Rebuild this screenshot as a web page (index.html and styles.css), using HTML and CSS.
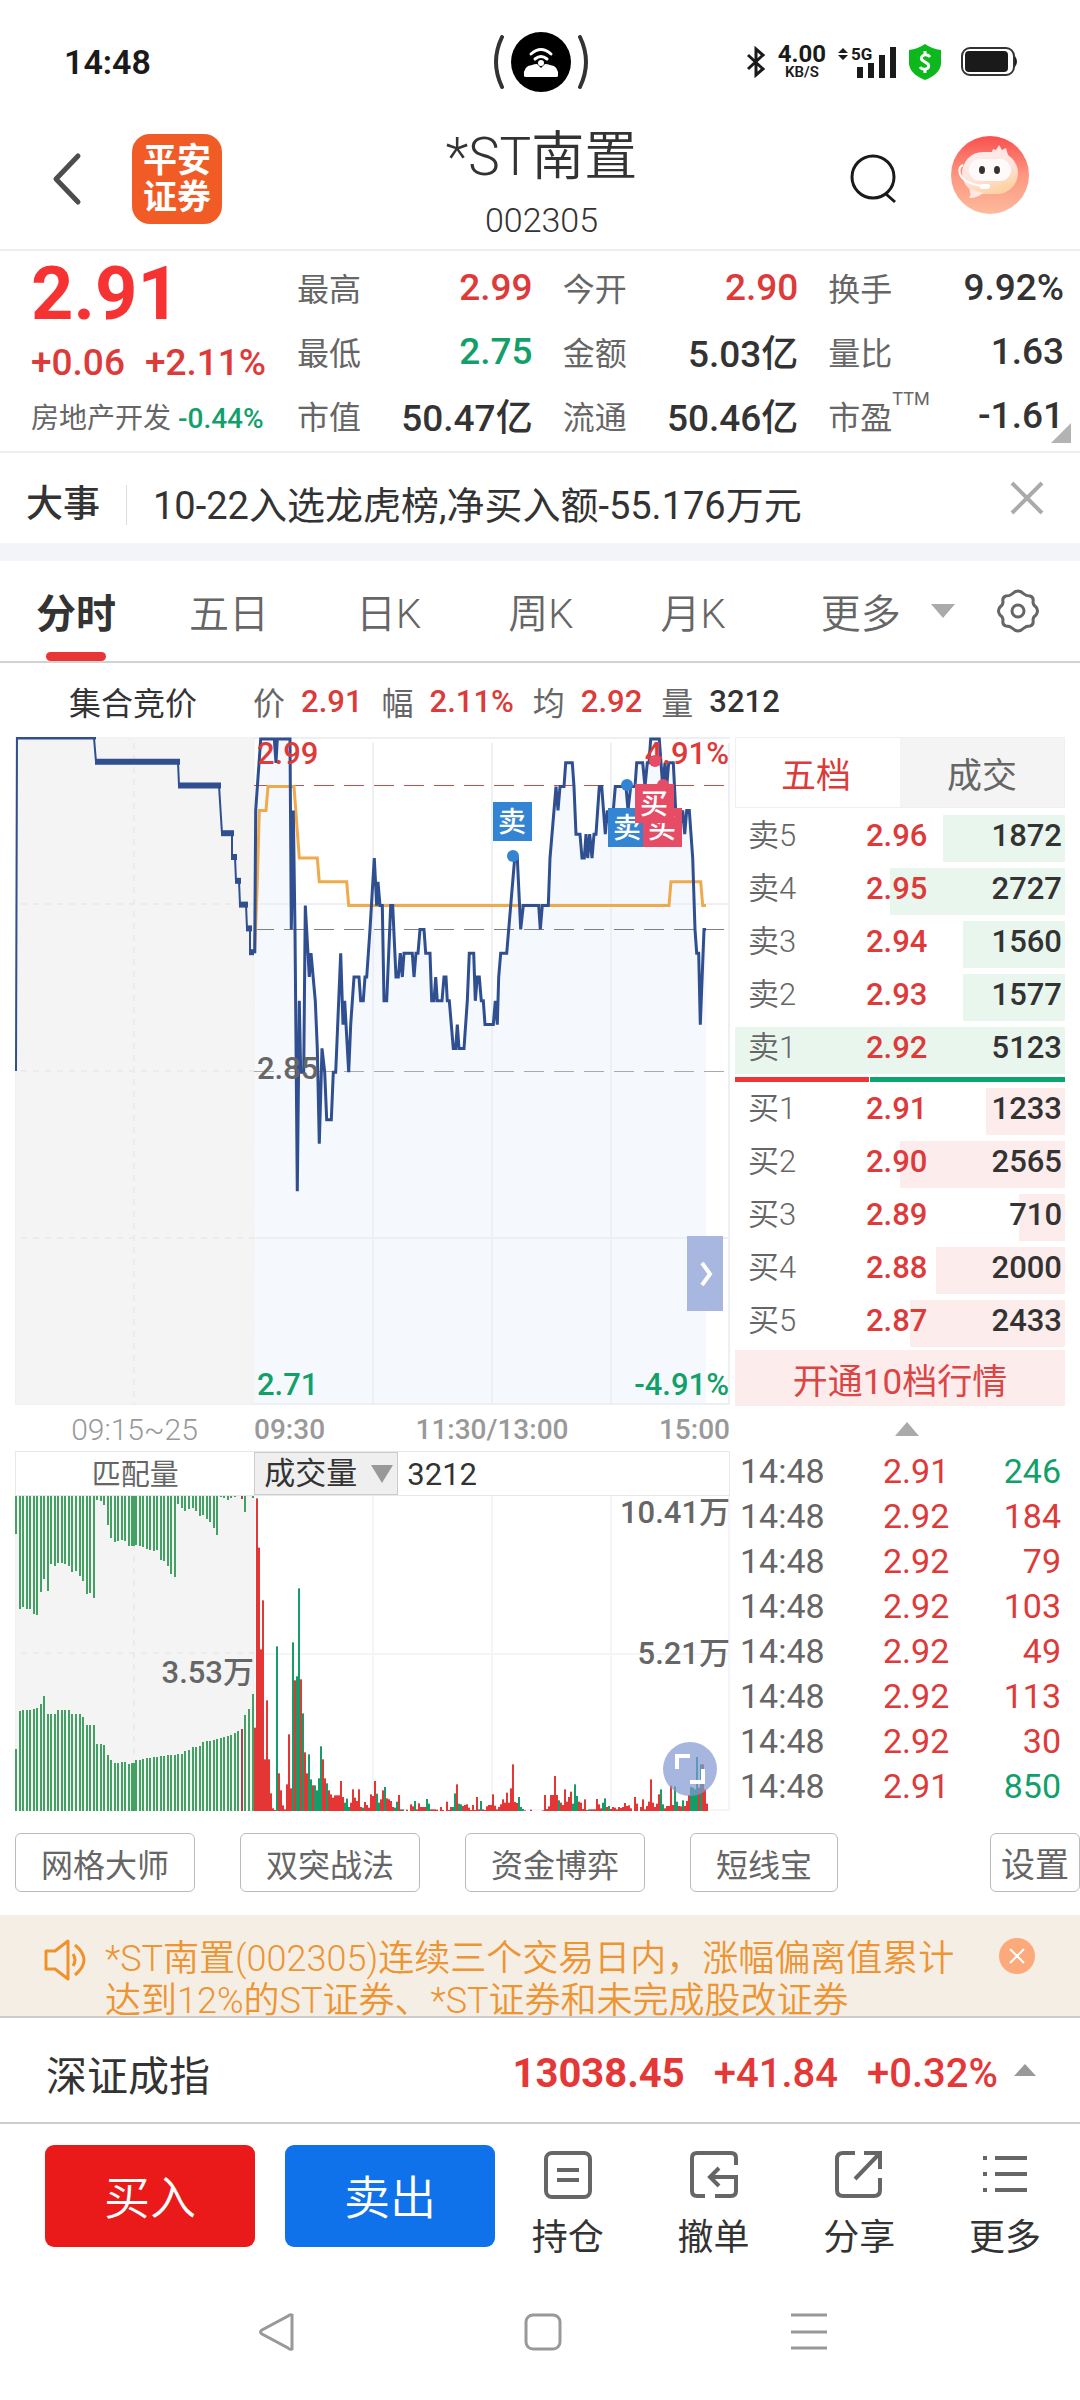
FILE: index.html
```html
<!DOCTYPE html>
<html lang="zh-CN">
<head>
    <meta charset="UTF-8">
    <meta name="viewport" content="width=device-width, initial-scale=1.0">
    <title>*ST南置 002305</title>
    <link rel="stylesheet" href="styles.css">
</head>
<body>
    <!-- 状态栏 -->
    <div class="status">
        <span class="status-time">14:48</span>
        <svg class="island" width="96" height="64" viewBox="0 0 96 64">
            <circle cx="48" cy="32" r="30"/>
            <path class="arc" d="M9 7Q-3 32 9 57M87 7Q99 32 87 57"/>
            <path class="white" d="M31 46q-1-10 8-11q2-1 5-1l4 4l4-4q3 0 5 1q9 1 8 11q0 1-2 1H33q-2 0-2-1z"/>
            <path class="wave" d="M38 24q10-9 20 0M42 29q6-5 12 0"/>
            <circle class="white" cx="48" cy="33" r="3"/>
        </svg>
        <div class="status-icons">
            <svg width="20" height="32" viewBox="0 0 20 32"><path class="bt" d="M2 9L17 23L10 29V3L17 9L2 23"/></svg>
            <span class="speed"><b>4.00</b><small>KB/S</small></span>
            <svg width="58" height="34" viewBox="0 0 58 34">
                <path d="M5 2l5 5H0zM5 14l5-5H0z" transform="translate(0 1)"/>
                <text x="13" y="15">5G</text>
                <path d="M19 22h6v11h-6zM30 18h6v15h-6zM41 10h6v23h-6zM52 2h6v31h-6z"/>
            </svg>
            <svg width="34" height="36" viewBox="0 0 34 36">
                <path class="shield" d="M17 0Q24 5 33 6V20Q32 30 17 36Q2 30 1 20V6Q10 5 17 0z"/>
                <path class="dollar" d="M22 13Q20 10 16 11Q12 13 14 16L20 20Q22 24 18 25Q14 26 12 23M17 7v4M17 25v4"/>
            </svg>
            <svg class="battery-icon" width="58" height="32" viewBox="0 0 58 32">
                <rect class="battery" x="2" y="2" width="52" height="27" rx="8"/>
                <rect x="5" y="5" width="43" height="21" rx="4"/>
                <path d="M55 10q4 6 0 11z"/>
            </svg>
        </div>
    </div>

    <!-- 标题栏 -->
    <header class="header">
        <div class="header-left">
            <button class="icon-btn" aria-label="返回">
                <svg width="32" height="54" viewBox="0 0 32 54"><path class="back" d="M28 4L6 27L28 50"/></svg>
            </button>
            <a class="logo" href="#">平安<br>证券</a>
        </div>
        <div class="title">
            <h1>*ST南置</h1>
            <p>002305</p>
        </div>
        <div class="header-right">
            <button class="icon-btn" aria-label="搜索">
                <svg width="50" height="54" viewBox="0 0 50 54"><circle class="search" cx="23" cy="25" r="21"/><path class="search" d="M36 42L45 50"/></svg>
            </button>
            <button class="icon-btn service" aria-label="客服">
                <svg width="80" height="80" viewBox="0 0 80 80">
                    <defs>
                        <linearGradient id="av" x2="0" y2="1"><stop offset="0" stop-color="#f9504f"/><stop offset="0.5" stop-color="#fd9680"/><stop offset="1" stop-color="#fdba9c"/></linearGradient>
                        <linearGradient id="head" x2="0.5" y2="1"><stop offset="0" stop-color="#ffeeee"/><stop offset="0.6" stop-color="#ffe3dc"/><stop offset="1" stop-color="#fdd3a4"/></linearGradient>
                    </defs>
                    <circle cx="40" cy="40" r="39" fill="url(#av)"/>
                    <path d="M41 19l2-5 3 1 3-5 3 5 4-2 2 7z" fill="#ffe4e6"/>
                    <rect x="12" y="17" width="56" height="42" rx="21" fill="url(#head)"/>
                    <path d="M19 54q3 5 0 9q9 0 14-5z" fill="#ffe9e2"/>
                    <rect x="19" y="24" width="42" height="22" rx="11" fill="#fffafa"/>
                    <path d="M13 30q-5 2-3 9q3 9 22 12" fill="none" stroke="#fff" stroke-width="2"/>
                    <rect x="30" y="49" width="10" height="5" rx="2" fill="#fff"/>
                    <ellipse cx="32" cy="35" rx="3" ry="4" fill="#333"/>
                    <ellipse cx="47" cy="35" rx="3" ry="4" fill="#333"/>
                </svg>
            </button>
        </div>
    </header>

    <!-- 行情概览 -->
    <section class="quote">
        <div class="price-box">
            <div class="price">2.91</div>
            <div class="change"><span>+0.06</span><span>+2.11%</span></div>
            <div class="sector">房地产开发 <span class="green">-0.44%</span></div>
        </div>
        <dl class="stats">
            <div><dt>最高</dt><dd class="red">2.99</dd></div>
            <div><dt>今开</dt><dd class="red">2.90</dd></div>
            <div><dt>换手</dt><dd>9.92%</dd></div>
            <div><dt>最低</dt><dd class="green">2.75</dd></div>
            <div><dt>金额</dt><dd>5.03亿</dd></div>
            <div><dt>量比</dt><dd>1.63</dd></div>
            <div><dt>市值</dt><dd>50.47亿</dd></div>
            <div><dt>流通</dt><dd>50.46亿</dd></div>
            <div><dt>市盈<sup>TTM</sup></dt><dd>-1.61</dd></div>
        </dl>
        <i class="corner"></i>
    </section>

    <section class="news">
        <strong>大事</strong>
        <a href="#">10-22入选龙虎榜,净买入额-55.176万元</a>
        <button class="icon-btn" aria-label="关闭">
            <svg width="34" height="34" viewBox="0 0 34 34"><path class="close" d="M2 2L32 32M32 2L2 32"/></svg>
        </button>
    </section>

    <!-- 周期切换 -->
    <nav class="tabs">
        <button class="tab active">分时</button>
        <button class="tab">五日</button>
        <button class="tab">日K</button>
        <button class="tab">周K</button>
        <button class="tab">月K</button>
        <button class="tab more">更多<i class="down"></i></button>
        <button class="icon-btn gear-btn" aria-label="设置">
            <svg width="44" height="46" viewBox="0 0 44 46">
                <path class="gear" d="M22 3Q25 3 28 6Q30 8 34 8Q38 9 37 14Q37 17 40 19Q43 23 40 27Q37 29 37 32Q38 37 34 38Q30 38 28 40Q22 46 16 40Q14 38 10 38Q6 37 7 32Q7 29 4 27Q1 23 4 19Q7 17 7 14Q6 9 10 8Q14 8 16 6Q19 3 22 3z"/>
                <circle class="gear" cx="22" cy="23" r="6"/>
            </svg>
        </button>
    </nav>

    <div class="info">
        <span class="info-name">集合竞价</span>
        <span>价</span><b class="red">2.91</b>
        <span>幅</span><b class="red">2.11%</b>
        <span>均</span><b class="red">2.92</b>
        <span>量</span><b>3212</b>
    </div>

    <main class="market">
        <div class="charts">
            <div class="chart-box">
                <svg id="priceChart" class="chart" viewBox="0 0 715 668">
                    <rect class="auction-bg" x="0" y="0" width="239" height="668"/>
                    <g id="priceSeries"></g>
                    <path class="grid" d="M239 1H715M239 167H715M239 501H715M239 667H715M358 6V668M477 6V668M596 6V668M714 6V668"/>
                    <path class="grid dash" d="M6 167H239M6 334H239M6 501H239M119 6V668"/>
                    <path class="ref up" d="M239 48H710"/>
                    <path class="ref" d="M239 192H710"/>
                    <path class="ref mid" d="M239 334H710"/>
                    <g id="priceLines"></g>
                    <text class="red" x="242" y="27">2.99</text>
                    <text class="red" x="714" y="27" text-anchor="end">4.91%</text>
                    <text class="grey" x="242" y="342">2.85</text>
                    <text class="green" x="242" y="658">2.71</text>
                    <text class="green" x="714" y="658" text-anchor="end">-4.91%</text>
                    <g id="marks"></g>
                </svg>
                <button class="side-btn" aria-label="展开">
                    <svg width="14" height="26" viewBox="0 0 14 26"><path d="M2 2L10 13L2 24"/></svg>
                </button>
            </div>
            <div class="axis">
                <span class="axis-auction">09:15~25</span>
                <span class="axis-main"><b>09:30</b><b>11:30/13:00</b><b>15:00</b></span>
            </div>
            <div class="vol-head">
                <span class="vol-auction">匹配量</span>
                <label class="vol-select">
                    <select aria-label="指标"><option>成交量</option></select>
                    <i class="down"></i>
                </label>
                <span class="vol-now">3212</span>
            </div>
            <div class="chart-box">
                <svg id="volChart" class="chart" viewBox="0 0 715 315">
                    <rect class="auction-bg" x="0" y="0" width="239" height="315"/>
                    <path class="grid vol-grid" d="M239 158H715M239 314H715M358 0V315M477 0V315M596 0V315M714 0V315"/>
                    <path class="grid dash" d="M6 157H239M119 0V315"/>
                    <g id="volBars"></g>
                    <text class="grey" x="239" y="187" text-anchor="end">3.53万</text>
                    <text class="grey" x="715" y="27" text-anchor="end">10.41万</text>
                    <text class="grey" x="715" y="168" text-anchor="end">5.21万</text>
                </svg>
                <button class="zoom-btn" aria-label="全屏">
                    <svg width="30" height="30" viewBox="0 0 30 30"><path d="M2 15V2H15M28 15V28H15"/></svg>
                </button>
            </div>
        </div>

        <aside class="book">
            <div class="book-tabs">
                <button class="on">五档</button>
                <button>成交</button>
            </div>
            <table class="depth sell">
                <tr style="--w: 37%"><th>卖5</th><td class="red">2.96</td><td>1872</td></tr>
                <tr style="--w: 53%"><th>卖4</th><td class="red">2.95</td><td>2727</td></tr>
                <tr style="--w: 31%"><th>卖3</th><td class="red">2.94</td><td>1560</td></tr>
                <tr style="--w: 31%"><th>卖2</th><td class="red">2.93</td><td>1577</td></tr>
                <tr style="--w: 100%"><th>卖1</th><td class="red">2.92</td><td>5123</td></tr>
            </table>
            <div class="ratio"><i style="width: 41%"></i></div>
            <table class="depth buy">
                <tr style="--w: 24%"><th>买1</th><td class="red">2.91</td><td>1233</td></tr>
                <tr style="--w: 50%"><th>买2</th><td class="red">2.90</td><td>2565</td></tr>
                <tr style="--w: 14%"><th>买3</th><td class="red">2.89</td><td>710</td></tr>
                <tr style="--w: 39%"><th>买4</th><td class="red">2.88</td><td>2000</td></tr>
                <tr style="--w: 47%"><th>买5</th><td class="red">2.87</td><td>2433</td></tr>
            </table>
            <button class="open-ten">开通10档行情</button>
            <div class="fold"><i class="up-arrow"></i></div>
            <table class="ticks">
                <tr><td>14:48</td><td class="red">2.91</td><td class="green">246</td></tr>
                <tr><td>14:48</td><td class="red">2.92</td><td class="red">184</td></tr>
                <tr><td>14:48</td><td class="red">2.92</td><td class="red">79</td></tr>
                <tr><td>14:48</td><td class="red">2.92</td><td class="red">103</td></tr>
                <tr><td>14:48</td><td class="red">2.92</td><td class="red">49</td></tr>
                <tr><td>14:48</td><td class="red">2.92</td><td class="red">113</td></tr>
                <tr><td>14:48</td><td class="red">2.92</td><td class="red">30</td></tr>
                <tr><td>14:48</td><td class="red">2.91</td><td class="green">850</td></tr>
            </table>
        </aside>
    </main>

    <div class="tools">
        <button>网格大师</button>
        <button>双突战法</button>
        <button>资金博弈</button>
        <button>短线宝</button>
        <button class="set">设置</button>
    </div>

    <!-- 公告 -->
    <section class="notice">
        <svg class="horn" width="44" height="44" viewBox="0 0 44 44"><path d="M3 13V31H12L25 41V3L12 13zM30 16Q34 22 30 28M32 7Q50 22 32 37"/></svg>
        <p>*ST南置(002305)连续三个交易日内，涨幅偏离值累计<br>达到12%的ST证券、*ST证券和未完成股改证券</p>
        <button class="icon-btn" aria-label="关闭公告">
            <svg width="36" height="36" viewBox="0 0 36 36"><circle cx="18" cy="18" r="18" fill="#fca97c"/><path d="M11 11L25 25M25 11L11 25" stroke="#fff" stroke-width="2"/></svg>
        </button>
    </section>

    <section class="index-row">
        <span class="index-name">深证成指</span>
        <strong>13038.45</strong>
        <span>+41.84</span>
        <span>+0.32%</span>
        <i class="up-arrow"></i>
    </section>

    <footer class="actions">
        <button class="trade buy-btn">买入</button>
        <button class="trade sell-btn">卖出</button>
        <button class="action">
            <svg width="52" height="52" viewBox="0 0 52 52"><rect x="4" y="4" width="44" height="44" rx="6"/><path d="M15 21H37M15 31H37"/></svg>
            持仓
        </button>
        <button class="action">
            <svg width="52" height="52" viewBox="0 0 52 52"><path d="M48 16V9Q48 4 43 4H9Q4 4 4 9V42Q4 47 9 47H17M27 47H43Q48 47 48 42V28H22M31 19L22 28L31 37"/></svg>
            撤单
        </button>
        <button class="action">
            <svg width="52" height="52" viewBox="0 0 52 52"><path d="M22 4H10Q4 4 4 10V41Q4 47 10 47H41Q47 47 47 41V29M31 4H47V20M47 4L22 30"/></svg>
            分享
        </button>
        <button class="action">
            <svg width="52" height="52" viewBox="0 0 52 52"><path d="M4 9H8M16 9H48M4 25H8M16 25H48M4 41H8M16 41H48"/></svg>
            更多
        </button>
    </footer>

    <div class="sysnav">
        <svg width="40" height="40" viewBox="0 0 40 40"><path d="M35 3V37Q33 38 31 36L5 22Q2 20 5 18L31 4Q33 2 35 3z"/></svg>
        <svg width="40" height="40" viewBox="0 0 40 40"><rect x="3" y="3" width="34" height="34" rx="7"/></svg>
        <svg width="40" height="40" viewBox="0 0 40 40"><path d="M2 3H38M2 20H38M2 36H38"/></svg>
    </div>

    <script src="script.js"></script>
</body>
</html>
```
FILE: styles.css
```css
* {
    box-sizing: border-box;
}
body {
    margin: 0;
    background: #fff;
    color: #333;
    font-family: Roboto, "Noto Sans CJK SC", sans-serif;
}
button, select {
    margin: 0;
    padding: 0;
    border: none;
    background: none;
    color: inherit;
    font: inherit;
    cursor: pointer;
}
h1, p, dl, dd {
    margin: 0;
}
a {
    color: inherit;
    text-decoration: none;
}
svg {
    display: block;
    flex: none;
}
.red {
    color: #dd3a3a;
    fill: #dd3a3a;
}
.green {
    color: #12a06a;
    fill: #12a06a;
}
.grey {
    fill: #666;
}
.icon-btn {
    flex: none;
}
.down {
    flex: none;
    border: 12px solid transparent;
    border-top: 14px solid #aaa;
    border-bottom: none;
}
.up-arrow {
    flex: none;
    border: 12px solid transparent;
    border-bottom: 14px solid #aaa;
    border-top: none;
}

/* 状态栏 */
.status {
    display: grid;
    grid-template-columns: 1fr auto 1fr;
    align-items: center;
    height: 124px;
    padding: 0 62px 0 64px;
    color: #1a1a1a;
}
.status-time {
    font-size: 34px;
    font-weight: 600;
}
.island .arc, .island .wave {
    fill: none;
    stroke: #333;
    stroke-width: 4;
    stroke-linecap: round;
}
.island .wave {
    stroke: #fff;
    stroke-width: 3;
}
.island .white {
    fill: #fff;
}
.status-icons {
    display: flex;
    justify-content: flex-end;
    align-items: center;
    gap: 12px;
    fill: #1a1a1a;
}
.status-icons text {
    font-size: 17px;
    font-weight: 700;
}
.bt {
    fill: none;
    stroke: #1a1a1a;
    stroke-width: 3;
}
.speed {
    display: flex;
    flex-direction: column;
    align-items: center;
    font-size: 24px;
    line-height: 20px;
}
.speed small {
    font-size: 15px;
    font-weight: 600;
    line-height: 16px;
}
.shield {
    fill: #0cb81c;
}
.dollar {
    fill: none;
    stroke: #fff;
    stroke-width: 3;
}
.battery-icon {
    margin-left: 6px;
}
.battery {
    fill: none;
    stroke: #333;
    stroke-width: 2;
}

/* 标题栏 */
.header {
    display: grid;
    grid-template-columns: 1fr auto 1fr;
    align-items: center;
    height: 127px;
    padding: 0 50px;
    border-bottom: 2px solid #eee;
}
.header-left, .header-right {
    display: flex;
    align-items: center;
    gap: 50px;
    padding-bottom: 16px;
}
.header-right {
    justify-content: flex-end;
}
.service {
    padding-bottom: 8px;
}
.back {
    fill: none;
    stroke: #4d4d4d;
    stroke-width: 5;
    stroke-linecap: round;
    stroke-linejoin: round;
}
.logo {
    width: 90px;
    height: 90px;
    padding-top: 8px;
    border-radius: 18px;
    background: #f15b25;
    color: #fff;
    font-size: 34px;
    font-weight: 700;
    line-height: 37px;
    text-align: center;
}
.title {
    padding-left: 3px;
    text-align: center;
}
.title h1 {
    font-size: 53px;
    font-weight: 350;
    line-height: 66px;
}
.title p {
    font-size: 34px;
    font-weight: 350;
    line-height: 60px;
}
.search {
    fill: none;
    stroke: #1a1a1a;
    stroke-width: 3;
}

/* 行情概览 */
.quote {
    position: relative;
    display: flex;
    height: 202px;
    padding: 4px 16px 0 31px;
    border-bottom: 2px solid #eee;
}
.price-box {
    width: 266px;
    flex: none;
}
.price {
    height: 78px;
    color: #f63232;
    font-size: 74px;
    font-weight: 700;
    line-height: 78px;
}
.change {
    display: flex;
    gap: 20px;
    height: 60px;
    color: #dd3a3a;
    font-size: 37px;
    font-weight: 500;
    line-height: 60px;
}
.sector {
    color: #666;
    font-size: 28px;
    line-height: 52px;
    white-space: nowrap;
}
.sector .green {
    font-weight: 500;
}
.stats {
    flex: 1;
    display: grid;
    grid-template-columns: repeat(3, 1fr);
    grid-auto-rows: 64px;
    column-gap: 30px;
}
.stats div {
    display: flex;
    justify-content: space-between;
    align-items: center;
}
.stats dt {
    color: #666;
    font-size: 32px;
}
.stats dd {
    font-size: 37px;
    font-weight: 500;
}
.stats sup {
    font-size: 18px;
    line-height: 0;
    vertical-align: 24px;
}
.corner {
    position: absolute;
    right: 9px;
    bottom: 8px;
    border: 10px solid #b3b3b3;
    border-top-color: transparent;
    border-left-color: transparent;
}

.news {
    display: flex;
    align-items: center;
    height: 108px;
    padding: 0 36px 0 26px;
    border-bottom: 18px solid #f3f4f9;
    font-size: 38px;
}
.news strong {
    margin-top: 14px;
    padding-right: 26px;
    border-right: 1px solid #ddd;
    font-size: 37px;
    font-weight: 500;
    line-height: 40px;
}
.news a {
    flex: 1;
    padding: 8px 0 0 26px;
}
.close {
    stroke: #aaa;
    stroke-width: 4;
}

/* 周期切换 */
.tabs {
    display: flex;
    align-items: center;
    gap: 87px;
    height: 102px;
    padding: 0 40px 0 36px;
    border-bottom: 2px solid #d2d2d2;
}
.tab {
    position: relative;
    height: 100px;
    color: #666;
    font-size: 40px;
    font-weight: 350;
    white-space: nowrap;
}
.tab.active {
    margin-right: -14px;
    color: #333;
    font-weight: 700;
}
.tab.active::after {
    content: "";
    position: absolute;
    left: 10px;
    right: 10px;
    bottom: 0;
    height: 9px;
    border-radius: 5px;
    background: #e93535;
}
.tab.more {
    display: flex;
    align-items: center;
    gap: 30px;
    margin: 0 -87px 0 8px;
}
.gear-btn {
    margin-left: auto;
}
.gear {
    fill: none;
    stroke: #666;
    stroke-width: 3;
}

.info {
    display: flex;
    align-items: center;
    height: 74px;
    padding: 2px 0 0 69px;
    font-size: 32px;
}
.info span {
    color: #666;
}
.info b {
    margin: 0 19px 0 16px;
    font-size: 31px;
    font-weight: 500;
}
.info .info-name {
    margin-right: 56px;
    color: #333;
}

/* 图表区 */
.market {
    display: grid;
    grid-template-columns: minmax(0, 1fr) 330px;
    gap: 5px;
    padding: 0 15px;
}
.chart-box {
    position: relative;
}
.chart {
    width: 100%;
    height: auto;
}
.chart text {
    font-size: 31px;
    font-weight: 500;
}
.chart .mark-text {
    fill: #fff;
    font-size: 28px;
    font-weight: 500;
}
.auction-bg {
    fill: #f4f4f4;
    stroke: #eee;
}
.grid {
    fill: none;
    stroke: #edeff3;
    stroke-width: 2;
}
.grid.dash {
    stroke: #ebebeb;
    stroke-dasharray: 6 6;
}
.grid.vol-grid {
    stroke: #f5f5f7;
}
.ref {
    stroke: #808080;
    stroke-width: 1;
    stroke-dasharray: 20 10;
    shape-rendering: crispEdges;
}
.ref.up {
    stroke: #c4514c;
}
.ref.mid {
    stroke: #aaa;
}
.line-area {
    fill: #f5f8fd;
}
.line-price, .line-auction, .line-step {
    fill: none;
    stroke: #2f4f91;
    stroke-width: 3;
}
.line-auction {
    stroke-width: 2;
}
.line-step {
    stroke-width: 6;
}
.line-avg {
    fill: none;
    stroke: #efaa4b;
    stroke-width: 3;
}
.side-btn {
    position: absolute;
    right: 7px;
    top: 499px;
    width: 36px;
    height: 75px;
    padding-left: 13px;
    background: #a8b7df;
}
.side-btn path, .zoom-btn path {
    fill: none;
    stroke: #fff;
    stroke-width: 4;
}
.zoom-btn {
    position: absolute;
    right: 13px;
    bottom: 15px;
    width: 54px;
    height: 54px;
    padding-left: 12px;
    border-radius: 50%;
    background: rgba(130, 151, 210, 0.7);
}
.axis {
    display: flex;
    height: 46px;
    color: #999;
    font-size: 30px;
    line-height: 50px;
}
.axis-auction {
    flex: 239;
    text-align: center;
    font-weight: 300;
}
.axis-main {
    flex: 476;
    display: flex;
    justify-content: space-between;
    font-size: 28px;
}
.axis-main b {
    font-weight: 500;
}
.vol-head {
    display: flex;
    height: 45px;
    border: 1px solid #e8e8e8;
    font-size: 31px;
    line-height: 46px;
}
.vol-auction {
    width: calc(100% * 239 / 715);
    color: #666;
    font-size: 29px;
    text-align: center;
}
.vol-select {
    display: flex;
    align-items: center;
    gap: 14px;
    width: 144px;
    padding: 0 2px 0 9px;
    border: 1px solid #ccc;
    background: #efefef;
}
.vol-select select {
    appearance: none;
    color: #333;
}
.vol-select .down {
    border-width: 18px 11px 0;
    border-top-color: #999;
}
.vol-now {
    padding-left: 9px;
}

/* 盘口 */
.book {
    font-size: 31px;
}
.book-tabs {
    display: grid;
    grid-template-columns: 164px 1fr;
    height: 71px;
    margin-bottom: 4px;
    border: 1px solid #f0f0f0;
    font-size: 35px;
}
.book-tabs button {
    background: #f4f4f4;
    color: #666;
}
.book-tabs .on {
    padding-right: 4px;
    background: #fff;
    color: #dd3a3a;
}
.depth, .ticks {
    width: 100%;
    border-collapse: collapse;
    table-layout: fixed;
}
.depth tr {
    height: 53px;
    background: linear-gradient(var(--c), var(--c)) right center / var(--w) 47px no-repeat;
}
.sell {
    --c: #e9f6ee;
}
.buy {
    --c: #fcecec;
}
.depth th, .depth td {
    padding: 0 3px 6px 0;
    font-weight: 500;
    line-height: 36px;
}
.depth th {
    width: 131px;
    padding-left: 13px;
    color: #666;
    font-weight: 350;
    text-align: left;
}
.depth td:last-child, .ticks td:last-child {
    text-align: right;
}
.ratio {
    height: 5px;
    margin-bottom: 3px;
    background: #0aa66d;
}
.ratio i {
    display: block;
    height: 5px;
    border-right: 1px solid #fff;
    background: #f03434;
}
.open-ten {
    display: block;
    width: 100%;
    height: 56px;
    background: #fcecec;
    color: #dd4545;
    font-size: 35px;
}
.fold {
    display: flex;
    justify-content: center;
    align-items: flex-start;
    height: 45px;
    padding: 16px 0 0 14px;
}
.ticks tr {
    height: 45px;
}
.ticks td {
    padding: 0 4px 6px 0;
    font-size: 34px;
    line-height: 38px;
}
.ticks td:first-child {
    width: 148px;
    padding-left: 5px;
    color: #666;
}

.tools {
    display: flex;
    gap: 45px;
    padding: 22px 0 23px 15px;
    color: #666;
    font-size: 32px;
}
.tools button {
    height: 59px;
    padding: 0 25px;
    border: 1px solid #bbb;
    border-radius: 6px;
    white-space: nowrap;
}
.tools .set {
    margin-left: auto;
    padding: 0 10px;
    font-size: 34px;
}

/* 公告 */
.notice {
    display: flex;
    align-items: flex-start;
    height: 103px;
    padding: 23px 45px 0 43px;
    overflow: hidden;
    border-bottom: 2px solid #ccc;
    background: #f5eee5;
    color: #ed9433;
}
.notice p {
    flex: 1;
    padding-left: 18px;
    font-size: 36px;
    font-weight: 350;
    line-height: 42px;
    white-space: nowrap;
}
.horn path {
    fill: none;
    stroke: #f0922c;
    stroke-width: 3;
    stroke-linejoin: round;
}

.index-row {
    display: flex;
    align-items: center;
    height: 106px;
    padding: 6px 44px 0 46px;
    border-bottom: 2px solid #ccc;
    color: #e43838;
    font-size: 40px;
    font-weight: 500;
}
.index-row span {
    margin-left: 29px;
}
.index-row .index-name {
    margin: 0 auto 0 0;
    color: #333;
    font-size: 41px;
    font-weight: 400;
}
.index-row .up-arrow {
    margin: 0 0 6px 16px;
    border-width: 0 11px 12px;
    border-bottom-color: #999;
}

/* 底部操作 */
.actions {
    display: flex;
    align-items: flex-start;
    padding: 21px 2px 0 45px;
}
.trade {
    width: 210px;
    height: 102px;
    margin-right: 30px;
    padding-bottom: 4px;
    border-radius: 9px;
    background: #ea1a1a;
    color: #fff;
    font-size: 46px;
    font-weight: 350;
}
.sell-btn {
    margin-right: 0;
    background: #1072eb;
}
.action {
    display: flex;
    flex: 1;
    flex-direction: column;
    align-items: center;
    gap: 10px;
    padding-top: 4px;
    font-size: 36px;
    line-height: 54px;
}
.action path, .action rect {
    fill: none;
    stroke: #666;
    stroke-width: 4;
}
.sysnav {
    display: grid;
    grid-template-columns: 1fr 1fr 1fr;
    justify-items: center;
    padding: 47px 138px 30px 144px;
}
.sysnav path, .sysnav rect {
    fill: none;
    stroke: #999;
    stroke-width: 3;
}
```
FILE: script.js
```js
const NS = 'http://www.w3.org/2000/svg';

function add(parent, tag, attrs, text) {
    const el = document.createElementNS(NS, tag);
    for (const key in attrs) el.setAttribute(key, attrs[key]);
    if (text) el.textContent = text;
    parent.appendChild(el);
    return el;
}

// 每一档 0.01 元，第 0 档为 2.99；x 以 1/3 像素为单位
const toPath = pts => 'M' + pts.map(([x, level]) => `${(x / 3 + 225).toFixed(1)} ${(2 + level * 23.8).toFixed(1)}`).join('L');

const price = [
    [44,9],[47,3],[62,0],[103,0],[108,1],[112,0],[150,0],[154,8],[160,3],[165,8],[172,19],[178,11],[182,14],[191,14],[196,7],
    [208,10],[213,9],[226,11],[232,13],[238,17],[246,13],[254,14],[260,16],[274,16],[280,14],[287,14],[302,9],[309,12],[314,11],
    [326,14],[332,12],[342,10],[357,10],[362,11],[370,11],[375,10],[380,10],[390,8],[403,5],[410,7],[414,6],[420,7],[427,7],
    [432,11],[440,11],[452,7],[458,7],[468,10],[475,10],[481,9],[487,10],[492,9],[517,9],[522,10],[528,9],[534,9],[540,8],
    [552,8],[557,9],[570,9],[575,11],[582,11],[587,10],[592,11],[606,11],[612,10],[618,10],[622,11],[628,11],[640,13],[647,13],
    [652,12],[657,13],[672,13],[682,11],[688,9],[701,9],[706,11],[712,10],[718,10],[724,11],[730,11],[735,12],[760,12],[766,11],
    [772,12],[776,10],[782,9],[800,9],[812,7],[824,5],[832,5],[842,8],[850,7],[896,7],[901,8],[907,7],[925,7],[930,5],[948,2],
    [954,3],[960,2],[972,2],[977,1],[997,1],[1002,2],[1008,4],[1020,4],[1026,5],[1033,5],[1038,4],[1043,5],[1049,4],[1056,5],
    [1062,4],[1068,4],[1078,2],[1085,2],[1096,4],[1102,3],[1114,4],[1126,2],[1158,2],[1164,3],[1172,2],[1185,2],[1190,1],
    [1208,1],[1215,2],[1222,1],[1227,1],[1232,0],[1258,0],[1263,1],[1268,2],[1275,1],[1280,2],[1286,1],[1300,1],[1307,3],
    [1316,4],[1328,3],[1334,4],[1340,3],[1348,3],[1358,5],[1365,8],[1370,9],[1376,9],[1381,12],[1392,8],[1398,8]
];
const avg = [
    [44,9],[52,6],[58,3],[78,3],[84,2],[162,2],[178,5],[232,5],[238,6],[320,6],[326,7],[1287,7],[1293,6],[1382,6],[1388,7],[1398,7]
];
// 集合竞价：[起点, 终点, 档位]
const auction = [[1,81,0],[80,165,1],[163,206,2],[206,219,4],[216,222,5],[220,226,6],[224,233,7],[231,237,8],[234,239,9]];

const series = document.getElementById('priceSeries');
const lines = document.getElementById('priceLines');
add(series, 'path', { class: 'line-area', d: toPath(price) + 'V668H239Z' });
add(lines, 'path', { class: 'line-avg', d: toPath(avg) });
add(lines, 'path', { class: 'line-price', d: toPath(price) });

let auctionPath = 'M1 334';
auction.forEach(([x1, x2, level]) => {
    const y = 1 + level * 23.8;
    auctionPath += `L${x1 + 1} ${y}L${x2 - 2} ${y}`;
    add(lines, 'path', { class: level ? 'line-step' : 'line-price', d: `M${x1} ${y}H${x2}` });
});
add(lines, 'path', { class: 'line-auction', d: auctionPath });

// 买卖点
const marks = document.getElementById('marks');
const BLUE = '#3384d2';
const PINK = '#e64c66';
[[498,119,BLUE],[612,48,BLUE],[640,24,PINK],[648,48,PINK]].forEach(([cx, cy, fill]) => add(marks, 'circle', { cx, cy, r: 6, fill }));
[['卖',478,65,BLUE],['卖',593,71,BLUE],['买',628,71,PINK],['买',620,47,PINK]].forEach(([name, x, y, fill]) => {
    add(marks, 'rect', { x, y, width: 39, height: 39, fill });
    add(marks, 'text', { class: 'mark-text', x: x + 19, y: y + 30, 'text-anchor': 'middle' }, name);
});

// 匹配量
const matched = [
    62,100,101,101,101,102,103,107,115,97,97,97,101,101,101,101,97,97,97,94,86,86,86,67,67,66,56,51,48,48,49,49,47,48,51,51,52,53,53,
    54,54,55,55,56,56,56,57,57,60,61,64,64,65,69,70,70,71,72,73,74,75,76,78,80,82,96,102,117
];
const unmatched = [
    38,113,111,113,113,118,119,96,83,95,68,70,67,67,68,70,76,75,80,85,98,97,102,4,5,9,29,42,46,45,44,45,50,50,49,50,51,53,54,55,54,
    64,65,70,78,81,8,12,15,13,12,15,20,19,23,26,32,39,1,2,4,2,1,0,3,16,0,2
];
// 每分钟成交量，负数为绿柱
const volume = [
    250,938,790,485,632,155,332,155,53,8,3,-494,113,62,17,5,80,230,68,-506,392,-404,-668,395,-293,176,113,-170,-95,77,-77,-62,-98,
    -194,155,98,-83,62,50,40,47,47,47,90,42,-25,-37,-12,25,65,40,30,65,12,-10,27,18,10,50,45,90,-52,-25,35,62,-72,38,35,30,12,-10,
    -28,48,5,-5,0,4,0,20,14,-30,5,23,12,12,12,-36,-22,5,5,5,4,0,12,3,0,28,3,12,-12,-53,80,-22,-20,15,18,20,10,3,18,3,42,5,-30,5,3,
    14,18,18,50,16,5,12,20,35,25,55,25,68,140,27,24,-42,-12,-6,2,0,0,4,0,0,0,0,0,2,48,6,14,48,48,105,48,-32,25,18,65,28,42,58,-22,
    -80,-45,28,25,6,35,3,-5,5,5,5,36,20,8,-25,-38,12,-15,6,12,10,5,12,9,12,24,15,17,8,0,42,22,0,12,35,5,15,28,95,25,12,22,50,-65,
    -20,8,15,15,76,18,-74,-28,15,14,-32,15,30,48,-72,-70,-65,-162,70,-140,140,65,22
];
const bars = document.getElementById('volBars');
const bar = (x, y, width, height, fill) => add(bars, 'rect', { x, y, width, height, fill });

matched.forEach((h, i) => {
    const x = Math.round(i * 3.53);
    const color = i === 64 ? '#a8434d' : '#42a163';
    const width = i === 33 ? 4 : 2;
    bar(x, 315 - h, width, h, color);
    bar(x, 0, width, unmatched[i], color);
});
volume.forEach((v, i) => bar(239 + i * 2, 315 - Math.abs(v) / 3, 2, Math.abs(v) / 3, v < 0 ? '#159d69' : '#e53636'));
```
